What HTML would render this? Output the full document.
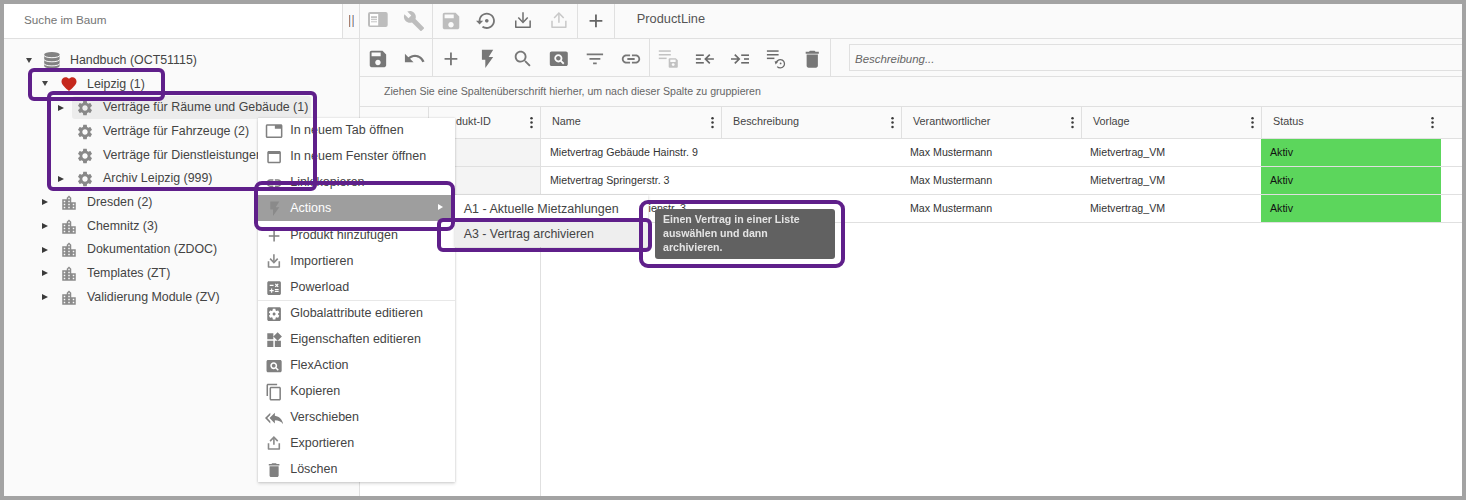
<!DOCTYPE html><html><head><meta charset="utf-8"><style>
html,body{margin:0;padding:0;}
body{width:1466px;height:500px;overflow:hidden;position:relative;background:#a3a3a3;font-family:"Liberation Sans", sans-serif;}
.t{position:absolute;white-space:nowrap;}
.r{position:absolute;}
</style></head><body>
<div class="r" style="left:4px;top:4px;width:1458px;height:492px;background:#ffffff;"></div>
<div class="r" style="left:4px;top:4px;width:355px;height:492px;background:#fafafa;"></div>
<div class="r" style="left:4px;top:4px;width:338px;height:34px;background:#ffffff;"></div>
<div class="r" style="left:4px;top:38px;width:355px;height:1px;background:#e0e0e0;"></div>
<div class="r" style="left:342px;top:4px;width:1px;height:34px;background:#e0e0e0;"></div>
<div class="r" style="left:359px;top:4px;width:1px;height:492px;background:#e0e0e0;"></div>
<div class="t" style="left:24px;top:13.80px;font-size:11.7px;line-height:11.7px;color:#757575;font-weight:normal;font-style:normal;letter-spacing:0px;">Suche im Baum</div>
<div class="r" style="left:349px;top:15px;width:1px;height:12px;background:#a88070;"></div>
<div class="r" style="left:350px;top:15px;width:1px;height:12px;background:#c8e4fa;"></div>
<div class="r" style="left:352px;top:15px;width:1px;height:12px;background:#e8b890;"></div>
<div class="r" style="left:353px;top:15px;width:1px;height:12px;background:#88a8d8;"></div>
<div class="r" style="left:360px;top:4px;width:1102px;height:492px;background:#ffffff;"></div>
<div class="r" style="left:360px;top:4px;width:1102px;height:34px;background:#fafafa;"></div>
<div class="r" style="left:360px;top:38px;width:1102px;height:1px;background:#e0e0e0;"></div>
<div class="r" style="left:360px;top:39px;width:1102px;height:37px;background:#fafafa;"></div>
<div class="r" style="left:360px;top:76px;width:1102px;height:1px;background:#e0e0e0;"></div>
<div class="r" style="left:360px;top:77px;width:1102px;height:29px;background:#fafafa;"></div>
<div class="r" style="left:360px;top:106px;width:1102px;height:1px;background:#e0e0e0;"></div>
<div class="r" style="left:360px;top:107px;width:1102px;height:31px;background:#fafafa;"></div>
<div class="r" style="left:360px;top:138px;width:1102px;height:1px;background:#e0e0e0;"></div>
<div class="r" style="left:432px;top:4px;width:1px;height:34px;background:#e0e0e0;"></div>
<div class="r" style="left:577px;top:4px;width:1px;height:34px;background:#e0e0e0;"></div>
<div class="r" style="left:614px;top:4px;width:1px;height:34px;background:#e0e0e0;"></div>
<div class="r" style="left:432px;top:39px;width:1px;height:37px;background:#e0e0e0;"></div>
<div class="r" style="left:649px;top:39px;width:1px;height:37px;background:#e0e0e0;"></div>
<div class="r" style="left:830px;top:39px;width:1px;height:37px;background:#e0e0e0;"></div>
<div class="t" style="left:636.8px;top:12.86px;font-size:12.8px;line-height:12.8px;color:#555;font-weight:normal;font-style:normal;letter-spacing:0px;">ProductLine</div>
<div class="r" style="left:849px;top:44px;width:613px;height:27px;background:#fafafa;box-sizing:border-box;border:1px solid #e0e0e0;border-right:none"></div>
<div class="t" style="left:855px;top:53.81px;font-size:11.45px;line-height:11.45px;color:#666;font-weight:normal;font-style:italic;letter-spacing:0px;">Beschreibung...</div>
<div class="t" style="left:384px;top:86.01px;font-size:10.62px;line-height:10.62px;color:#666;font-weight:normal;font-style:normal;letter-spacing:0px;">Ziehen Sie eine Spaltenüberschrift hierher, um nach dieser Spalte zu gruppieren</div>
<div class="r" style="left:428px;top:107px;width:1px;height:31px;background:#e0e0e0;"></div>
<div class="r" style="left:540px;top:107px;width:1px;height:31px;background:#e0e0e0;"></div>
<div class="r" style="left:721px;top:107px;width:1px;height:31px;background:#e0e0e0;"></div>
<div class="r" style="left:901px;top:107px;width:1px;height:31px;background:#e0e0e0;"></div>
<div class="r" style="left:1081px;top:107px;width:1px;height:31px;background:#e0e0e0;"></div>
<div class="r" style="left:1261px;top:107px;width:1px;height:31px;background:#e0e0e0;"></div>
<div class="t" style="left:456px;top:115.86px;font-size:10.8px;line-height:10.8px;color:#444;font-weight:normal;font-style:normal;letter-spacing:0px;">dukt-ID</div>
<div class="t" style="left:552px;top:115.86px;font-size:10.8px;line-height:10.8px;color:#444;font-weight:normal;font-style:normal;letter-spacing:0px;">Name</div>
<div class="t" style="left:733px;top:115.86px;font-size:10.8px;line-height:10.8px;color:#444;font-weight:normal;font-style:normal;letter-spacing:0px;">Beschreibung</div>
<div class="t" style="left:913px;top:115.86px;font-size:10.8px;line-height:10.8px;color:#444;font-weight:normal;font-style:normal;letter-spacing:0px;">Verantwortlicher</div>
<div class="t" style="left:1093px;top:115.86px;font-size:10.8px;line-height:10.8px;color:#444;font-weight:normal;font-style:normal;letter-spacing:0px;">Vorlage</div>
<div class="t" style="left:1273px;top:115.86px;font-size:10.8px;line-height:10.8px;color:#444;font-weight:normal;font-style:normal;letter-spacing:0px;">Status</div>
<svg class="r" style="left:529px;top:115px" width="5" height="15" viewBox="0 0 5 15" fill="#3a3a3a"><circle cx="2.5" cy="3.2" r="1.25"/><circle cx="2.5" cy="7.6" r="1.25"/><circle cx="2.5" cy="12" r="1.25"/></svg>
<svg class="r" style="left:710px;top:115px" width="5" height="15" viewBox="0 0 5 15" fill="#3a3a3a"><circle cx="2.5" cy="3.2" r="1.25"/><circle cx="2.5" cy="7.6" r="1.25"/><circle cx="2.5" cy="12" r="1.25"/></svg>
<svg class="r" style="left:890px;top:115px" width="5" height="15" viewBox="0 0 5 15" fill="#3a3a3a"><circle cx="2.5" cy="3.2" r="1.25"/><circle cx="2.5" cy="7.6" r="1.25"/><circle cx="2.5" cy="12" r="1.25"/></svg>
<svg class="r" style="left:1070px;top:115px" width="5" height="15" viewBox="0 0 5 15" fill="#3a3a3a"><circle cx="2.5" cy="3.2" r="1.25"/><circle cx="2.5" cy="7.6" r="1.25"/><circle cx="2.5" cy="12" r="1.25"/></svg>
<svg class="r" style="left:1250px;top:115px" width="5" height="15" viewBox="0 0 5 15" fill="#3a3a3a"><circle cx="2.5" cy="3.2" r="1.25"/><circle cx="2.5" cy="7.6" r="1.25"/><circle cx="2.5" cy="12" r="1.25"/></svg>
<svg class="r" style="left:1430px;top:115px" width="5" height="15" viewBox="0 0 5 15" fill="#3a3a3a"><circle cx="2.5" cy="3.2" r="1.25"/><circle cx="2.5" cy="7.6" r="1.25"/><circle cx="2.5" cy="12" r="1.25"/></svg>
<div class="r" style="left:428px;top:139px;width:112px;height:27px;background:#f4f4f4;"></div>
<div class="r" style="left:360px;top:166px;width:1102px;height:1px;background:#e0e0e0;"></div>
<div class="r" style="left:428px;top:138px;width:1px;height:28px;background:#e0e0e0;"></div>
<div class="r" style="left:540px;top:138px;width:1px;height:28px;background:#e0e0e0;"></div>
<div class="r" style="left:1261px;top:139px;width:180px;height:27px;background:#5cd65c;"></div>
<div class="r" style="left:428px;top:167px;width:112px;height:27px;background:#f4f4f4;"></div>
<div class="r" style="left:360px;top:194px;width:1102px;height:1px;background:#e0e0e0;"></div>
<div class="r" style="left:428px;top:166px;width:1px;height:28px;background:#e0e0e0;"></div>
<div class="r" style="left:540px;top:166px;width:1px;height:28px;background:#e0e0e0;"></div>
<div class="r" style="left:1261px;top:167px;width:180px;height:27px;background:#5cd65c;"></div>
<div class="r" style="left:428px;top:195px;width:112px;height:27px;background:#f4f4f4;"></div>
<div class="r" style="left:360px;top:222px;width:1102px;height:1px;background:#e0e0e0;"></div>
<div class="r" style="left:428px;top:194px;width:1px;height:28px;background:#e0e0e0;"></div>
<div class="r" style="left:540px;top:194px;width:1px;height:28px;background:#e0e0e0;"></div>
<div class="r" style="left:1261px;top:195px;width:180px;height:27px;background:#5cd65c;"></div>
<div class="t" style="left:550px;top:147.18px;font-size:10.65px;line-height:10.65px;color:#333;font-weight:normal;font-style:normal;letter-spacing:0px;">Mietvertrag Gebäude Hainstr. 9</div>
<div class="t" style="left:910px;top:147.18px;font-size:10.65px;line-height:10.65px;color:#333;font-weight:normal;font-style:normal;letter-spacing:0px;">Max Mustermann</div>
<div class="t" style="left:1090px;top:147.18px;font-size:10.65px;line-height:10.65px;color:#333;font-weight:normal;font-style:normal;letter-spacing:0px;">Mietvertrag_VM</div>
<div class="t" style="left:1270px;top:147.18px;font-size:10.65px;line-height:10.65px;color:#111;font-weight:normal;font-style:normal;letter-spacing:0px;">Aktiv</div>
<div class="t" style="left:550px;top:175.18px;font-size:10.65px;line-height:10.65px;color:#333;font-weight:normal;font-style:normal;letter-spacing:0px;">Mietvertrag Springerstr. 3</div>
<div class="t" style="left:910px;top:175.18px;font-size:10.65px;line-height:10.65px;color:#333;font-weight:normal;font-style:normal;letter-spacing:0px;">Max Mustermann</div>
<div class="t" style="left:1090px;top:175.18px;font-size:10.65px;line-height:10.65px;color:#333;font-weight:normal;font-style:normal;letter-spacing:0px;">Mietvertrag_VM</div>
<div class="t" style="left:1270px;top:175.18px;font-size:10.65px;line-height:10.65px;color:#111;font-weight:normal;font-style:normal;letter-spacing:0px;">Aktiv</div>
<div class="t" style="left:550px;top:203.18px;font-size:10.65px;line-height:10.65px;color:#333;font-weight:normal;font-style:normal;letter-spacing:0px;"></div>
<div class="t" style="left:910px;top:203.18px;font-size:10.65px;line-height:10.65px;color:#333;font-weight:normal;font-style:normal;letter-spacing:0px;">Max Mustermann</div>
<div class="t" style="left:1090px;top:203.18px;font-size:10.65px;line-height:10.65px;color:#333;font-weight:normal;font-style:normal;letter-spacing:0px;">Mietvertrag_VM</div>
<div class="t" style="left:1270px;top:203.18px;font-size:10.65px;line-height:10.65px;color:#111;font-weight:normal;font-style:normal;letter-spacing:0px;">Aktiv</div>
<div class="r" style="left:540px;top:222px;width:1px;height:274px;background:#e0e0e0;"></div>
<div class="t" style="left:648.6px;top:203.38px;font-size:10.65px;line-height:10.65px;color:#333;font-weight:normal;font-style:normal;letter-spacing:0px;">ienstr. 3</div>
<svg class="r" style="left:368px;top:11.8px" width="20" height="15" viewBox="0 0 20 15"><rect x="0" y="0" width="19.7" height="15" rx="2" fill="#bdbdbd"/><rect x="2" y="2" width="8.2" height="11.5" fill="#fff"/><rect x="3" y="4.2" width="6" height="2.1" fill="#c4c4c4"/><rect x="3" y="7.1" width="6" height="1" fill="#c4c4c4"/><rect x="3" y="9.3" width="6" height="1" fill="#c4c4c4"/></svg>
<svg class="r" style="left:403.1px;top:9.6px;" width="22" height="22" viewBox="0 0 24 24" fill="#bdbdbd"><path d="M22.7 19l-9.1-9.1c.9-2.3.4-5-1.5-6.9-2-2-5-2.4-7.4-1.3L9 6 6 9 1.6 4.7C.4 7.1.9 10.1 2.9 12.1c1.9 1.9 4.6 2.4 6.9 1.5l9.1 9.1c.4.4 1 .4 1.4 0l2.3-2.3c.5-.4.5-1.1.1-1.4z"/></svg>
<svg class="r" style="left:440.2px;top:10px;" width="22" height="22" viewBox="0 0 24 24" fill="#bdbdbd"><path d="M17 3H5c-1.11 0-2 .9-2 2v14c0 1.1.89 2 2 2h14c1.1 0 2-.9 2-2V7l-4-4zm-5 16c-1.66 0-3-1.34-3-3s1.34-3 3-3 3 1.34 3 3-1.34 3-3 3zm3-10H5V5h10v4z"/></svg>
<svg class="r" style="left:476.3px;top:10.1px;" width="21.6" height="21.6" viewBox="0 0 24 24" fill="#757575"><path d="M14 12c0-1.1-.9-2-2-2s-2 .9-2 2 .9 2 2 2 2-.9 2-2zm-2-9c-4.97 0-9 4.03-9 9H0l4 4 4-4H5c0-3.87 3.13-7 7-7s7 3.13 7 7-3.13 7-7 7c-1.51 0-2.91-.49-4.06-1.3l-1.42 1.44C8.04 20.3 9.94 21 12 21c4.97 0 9-4.03 9-9s-4.03-9-9-9z"/></svg>
<svg class="r" style="left:513px;top:10px" width="20" height="21" viewBox="513 10 20 21"><g fill="none" stroke="#6e6e6e" stroke-width="1.5"><path d="M515.75 20.5 V27.25 H530.15 V20.5" stroke-linejoin="round"/><path d="M523 12.3 V21.599999999999998"/><path d="M518.3 17.6 L523 22.4 L527.7 17.6"/></g></svg>
<svg class="r" style="left:549px;top:11px" width="20" height="19" viewBox="549 11 20 19"><g fill="none" stroke="#c8c8c8" stroke-width="1.5"><path d="M552.0 20.7 V27.15 H565.85 V20.7" stroke-linejoin="round"/><path d="M558.9 13.8 V22.7"/><path d="M554.1 18.1 L558.9 13 L563.6999999999999 18.1"/></g></svg>
<svg class="r" style="left:585px;top:9.7px;" width="21.9" height="21.9" viewBox="0 0 24 24" fill="#666"><path d="M19 13h-6v6h-2v-6H5v-2h6V5h2v6h6v2z"/></svg>
<svg class="r" style="left:367.1px;top:48.1px;" width="21.9" height="21.9" viewBox="0 0 24 24" fill="#777"><path d="M17 3H5c-1.11 0-2 .9-2 2v14c0 1.1.89 2 2 2h14c1.1 0 2-.9 2-2V7l-4-4zm-5 16c-1.66 0-3-1.34-3-3s1.34-3 3-3 3 1.34 3 3-1.34 3-3 3zm3-10H5V5h10v4z"/></svg>
<svg class="r" style="left:402.7px;top:47.2px;" width="23" height="23" viewBox="0 0 24 24" fill="#777"><path d="M12.5 8c-2.65 0-5.050.99-6.9 2.6L2 7v9h9l-3.62-3.62c1.39-1.16 3.16-1.88 5.12-1.88 3.54 0 6.55 2.31 7.6 5.5l2.37-.78C21.08 11.03 17.15 8 12.5 8z"/></svg>
<svg class="r" style="left:440px;top:47.6px;" width="21.9" height="21.9" viewBox="0 0 24 24" fill="#777"><path d="M19 13h-6v6h-2v-6H5v-2h6V5h2v6h6v2z"/></svg>
<svg class="r" style="left:474px;top:48px" width="27.1" height="21.8" viewBox="0 0 24 24" preserveAspectRatio="none" fill="#777"><path d="M7 2v11h3v9l7-12h-4l4-8z"/></svg>
<svg class="r" style="left:512.1px;top:48.1px;" width="21.8" height="21.8" viewBox="0 0 24 24" fill="#777"><path d="M15.5 14h-.79l-.28-.27C15.41 12.59 16 11.11 16 9.5 16 5.91 13.09 3 9.5 3S3 5.91 3 9.5 5.91 16 9.5 16c1.61 0 3.090-.59 4.23-1.57l.27.28v.79l5 4.99L20.49 19l-4.99-5zm-6 0C7.01 14 5 11.99 5 9.5S7.01 5 9.5 5 14 7.01 14 9.5 11.99 14 9.5 14z"/></svg>
<svg class="r" style="left:548.2px;top:48.3px;" width="21.6" height="21.6" viewBox="0 0 24 24" fill="#777"><path d="M11.5 9C10.12 9 9 10.12 9 11.5s1.12 2.5 2.5 2.5 2.5-1.12 2.5-2.5S12.88 9 11.5 9zM20 4H4c-1.1 0-2 .9-2 2v12c0 1.1.9 2 2 2h16c1.1 0 2-.9 2-2V6c0-1.1-.9-2-2-2zm-3.21 14.21l-2.91-2.91c-.69.44-1.51.7-2.38.7C9 16 7 14 7 11.5S9 7 11.5 7 16 9 16 11.5c0 .88-.26 1.69-.7 2.39l2.91 2.9-1.42 1.42z"/></svg>
<svg class="r" style="left:584.3px;top:48.2px;" width="21.8" height="21.8" viewBox="0 0 24 24" fill="#777"><path d="M10 18h4v-2h-4v2zM3 6v2h18V6H3zm3 7h12v-2H6v2z"/></svg>
<svg class="r" style="left:620px;top:48px;" width="22" height="22" viewBox="0 0 24 24" fill="#777"><path d="M3.9 12c0-1.71 1.39-3.1 3.1-3.1h4V7H7c-2.76 0-5 2.24-5 5s2.24 5 5 5h4v-1.9H7c-1.71 0-3.1-1.39-3.1-3.1zM8 13h8v-2H8v2zm9-6h-4v1.9h4c1.71 0 3.1 1.39 3.1 3.1s-1.39 3.1-3.1 3.1h-4V17h4c2.76 0 5-2.24 5-5s-2.24-5-5-5z"/></svg>
<svg class="r" style="left:800.5px;top:47.9px;" width="22.5" height="22.5" viewBox="0 0 24 24" fill="#777"><path d="M6 19c0 1.1.9 2 2 2h8c1.1 0 2-.9 2-2V7H6v12zM19 4h-3.5l-1-1h-5l-1 1H5v2h14V4z"/></svg>
<svg class="r" style="left:650px;top:40px" width="40" height="36" viewBox="650 40 40 36"><g fill="#c2c2c2"><rect x="658.8" y="50.3" width="12" height="1.5"/><rect x="658.8" y="54" width="12" height="1.5"/><rect x="658.8" y="57.6" width="7.8" height="1.5"/><path d="M668.7 59.3 a1 1 0 0 1 1 -1 h6.1 l2 2 v6.5 a1 1 0 0 1 -1 1 h-7.1 a1 1 0 0 1 -1 -1z"/></g><rect x="670.3" y="59.6" width="5.3" height="2.4" fill="#fafafa"/><circle cx="673.2" cy="64.6" r="1.4" fill="#fafafa"/></svg>
<svg class="r" style="left:690px;top:40px" width="100" height="36" viewBox="690 40 100 36"><g fill="#6a6a6a"><rect x="695.9" y="54.4" width="7.9" height="1.6"/><rect x="695.9" y="58.2" width="5" height="1.6"/><rect x="695.9" y="62" width="7.9" height="1.6"/><rect x="741.2" y="54.4" width="7.8" height="1.6"/><rect x="744" y="58.2" width="5" height="1.6"/><rect x="741.2" y="62" width="7.8" height="1.6"/><rect x="766.9" y="50.3" width="11.7" height="1.5"/><rect x="766.9" y="54" width="11.7" height="1.5"/><rect x="766.9" y="57.6" width="7.5" height="1.5"/></g><g stroke="#6a6a6a" stroke-width="1.7" fill="none"><path d="M713.9 59 H705.6 M709.8 54.6 L705.4 59 L709.8 63.4"/><path d="M731 59 H739 M734.8 54.6 L739.2 59 L734.8 63.4"/><path d="M777.2 66.6 A4.2 4.2 0 1 0 776.4 62.2" stroke-width="1.3"/></g><path d="M774.6 61.2 L778.4 61.6 L775.6 64.6z" fill="#6a6a6a"/><circle cx="780.6" cy="63.4" r="0.9" fill="#6a6a6a"/></svg>
<div class="r" style="left:72px;top:96px;width:239px;height:23px;background:#ececec;border-radius:3px"></div>
<div class="t" style="left:70px;top:54.00px;font-size:12.4px;line-height:12.4px;color:#444;font-weight:normal;font-style:normal;letter-spacing:0px;">Handbuch (OCT51115)</div>
<div class="r" style="left:26px;top:57.5px;width:0;height:0;border-left:3.5px solid transparent;border-right:3.5px solid transparent;border-top:5.5px solid #444"></div>
<svg class="r" style="left:44px;top:52px" width="16" height="17" viewBox="0 0 16 17"><path d="M0.2 2.4 A7.7 2.4 0 0 1 15.6 2.4 V14 A7.7 2.4 0 0 1 0.2 14z" fill="#828282"/><g stroke="#fafafa" stroke-width="1" fill="none"><path d="M0 3.3 A7.9 2.4 0 0 0 15.8 3.3"/><path d="M0 7.4 A7.9 2.4 0 0 0 15.8 7.4"/><path d="M0 11.5 A7.9 2.4 0 0 0 15.8 11.5"/></g></svg>
<div class="t" style="left:87px;top:77.65px;font-size:12.4px;line-height:12.4px;color:#444;font-weight:normal;font-style:normal;letter-spacing:0px;">Leipzig (1)</div>
<div class="r" style="left:42px;top:81.2px;width:0;height:0;border-left:3.5px solid transparent;border-right:3.5px solid transparent;border-top:5.5px solid #444"></div>
<svg class="r" style="left:60px;top:75.15px;" width="18" height="18" viewBox="0 0 24 24" fill="#c5281c"><path d="M12 21.35l-1.45-1.32C5.4 15.36 2 12.28 2 8.5 2 5.42 4.42 3 7.5 3c1.74 0 3.41.81 4.5 2.09C13.09 3.81 14.76 3 16.5 3 19.58 3 22 5.42 22 8.5c0 3.78-3.4 6.86-8.55 11.54L12 21.35z"/></svg>
<div class="t" style="left:103px;top:101.30px;font-size:12.4px;line-height:12.4px;color:#444;font-weight:normal;font-style:normal;letter-spacing:0px;">Verträge für Räume und Gebäude (1)</div>
<div class="r" style="left:58px;top:104.6px;width:0;height:0;border-top:3.6px solid transparent;border-bottom:3.6px solid transparent;border-left:6.3px solid #3a3a3a"></div>
<svg class="r" style="left:75.5px;top:99.3px;" width="18" height="18" viewBox="0 0 24 24" fill="#888"><path d="M19.14 12.94c.04-.3.06-.61.06-.94 0-.32-.02-.64-.07-.94l2.03-1.58c.18-.14.23-.41.12-.61l-1.92-3.32c-.12-.22-.37-.29-.59-.22l-2.39.96c-.5-.38-1.03-.7-1.62-.94L14.4 2.81c-.04-.24-.24-.41-.48-.41h-3.84c-.24 0-.43.17-.47.41L9.25 5.35c-.59.24-1.13.57-1.62.94L5.24 5.33c-.22-.08-.47 0-.59.22L2.74 8.87c-.12.21-.08.47.12.61l2.03 1.58c-.05.3-.09.63-.09.94s.02.64.07.94l-2.03 1.58c-.18.14-.23.41-.12.61l1.92 3.32c.12.22.37.29.59.22l2.39-.96c.5.38 1.03.7 1.62.94l.36 2.54c.05.24.24.41.48.41h3.84c.24 0 .44-.17.47-.41l.36-2.54c.59-.24 1.13-.56 1.62-.94l2.39.96c.22.08.47 0 .59-.22l1.92-3.32c.12-.22.07-.47-.12-.61l-2.01-1.58zM12 15.6c-1.98 0-3.6-1.62-3.6-3.6s1.62-3.6 3.6-3.6 3.6 1.62 3.6 3.6-1.62 3.6-3.6 3.6z"/></svg>
<div class="t" style="left:103px;top:124.95px;font-size:12.4px;line-height:12.4px;color:#444;font-weight:normal;font-style:normal;letter-spacing:0px;">Verträge für Fahrzeuge (2)</div>
<svg class="r" style="left:75.5px;top:122.94999999999999px;" width="18" height="18" viewBox="0 0 24 24" fill="#888"><path d="M19.14 12.94c.04-.3.06-.61.06-.94 0-.32-.02-.64-.07-.94l2.03-1.58c.18-.14.23-.41.12-.61l-1.92-3.32c-.12-.22-.37-.29-.59-.22l-2.39.96c-.5-.38-1.03-.7-1.62-.94L14.4 2.81c-.04-.24-.24-.41-.48-.41h-3.84c-.24 0-.43.17-.47.41L9.25 5.35c-.59.24-1.13.57-1.62.94L5.24 5.33c-.22-.08-.47 0-.59.22L2.74 8.87c-.12.21-.08.47.12.61l2.03 1.58c-.05.3-.09.63-.09.94s.02.64.07.94l-2.03 1.58c-.18.14-.23.41-.12.61l1.92 3.32c.12.22.37.29.59.22l2.39-.96c.5.38 1.03.7 1.62.94l.36 2.54c.05.24.24.41.48.41h3.84c.24 0 .44-.17.47-.41l.36-2.54c.59-.24 1.13-.56 1.62-.94l2.39.96c.22.08.47 0 .59-.22l1.92-3.32c.12-.22.07-.47-.12-.61l-2.01-1.58zM12 15.6c-1.98 0-3.6-1.62-3.6-3.6s1.62-3.6 3.6-3.6 3.6 1.62 3.6 3.6-1.62 3.6-3.6 3.6z"/></svg>
<div class="t" style="left:103px;top:148.60px;font-size:12.4px;line-height:12.4px;color:#444;font-weight:normal;font-style:normal;letter-spacing:0px;">Verträge für Dienstleistungen (1)</div>
<svg class="r" style="left:75.5px;top:146.6px;" width="18" height="18" viewBox="0 0 24 24" fill="#888"><path d="M19.14 12.94c.04-.3.06-.61.06-.94 0-.32-.02-.64-.07-.94l2.03-1.58c.18-.14.23-.41.12-.61l-1.92-3.32c-.12-.22-.37-.29-.59-.22l-2.39.96c-.5-.38-1.03-.7-1.62-.94L14.4 2.81c-.04-.24-.24-.41-.48-.41h-3.84c-.24 0-.43.17-.47.41L9.25 5.35c-.59.24-1.13.57-1.62.94L5.24 5.33c-.22-.08-.47 0-.59.22L2.74 8.87c-.12.21-.08.47.12.61l2.03 1.58c-.05.3-.09.63-.09.94s.02.64.07.94l-2.03 1.58c-.18.14-.23.41-.12.61l1.92 3.32c.12.22.37.29.59.22l2.39-.96c.5.38 1.03.7 1.62.94l.36 2.54c.05.24.24.41.48.41h3.84c.24 0 .44-.17.47-.41l.36-2.54c.59-.24 1.13-.56 1.62-.94l2.39.96c.22.08.47 0 .59-.22l1.92-3.32c.12-.22.07-.47-.12-.61l-2.01-1.58zM12 15.6c-1.98 0-3.6-1.62-3.6-3.6s1.62-3.6 3.6-3.6 3.6 1.62 3.6 3.6-1.62 3.6-3.6 3.6z"/></svg>
<div class="t" style="left:103px;top:172.25px;font-size:12.4px;line-height:12.4px;color:#444;font-weight:normal;font-style:normal;letter-spacing:0px;">Archiv Leipzig (999)</div>
<div class="r" style="left:58px;top:175.6px;width:0;height:0;border-top:3.6px solid transparent;border-bottom:3.6px solid transparent;border-left:6.3px solid #3a3a3a"></div>
<svg class="r" style="left:75.5px;top:170.25px;" width="18" height="18" viewBox="0 0 24 24" fill="#888"><path d="M19.14 12.94c.04-.3.06-.61.06-.94 0-.32-.02-.64-.07-.94l2.03-1.58c.18-.14.23-.41.12-.61l-1.92-3.32c-.12-.22-.37-.29-.59-.22l-2.39.96c-.5-.38-1.03-.7-1.62-.94L14.4 2.81c-.04-.24-.24-.41-.48-.41h-3.84c-.24 0-.43.17-.47.41L9.25 5.35c-.59.24-1.13.57-1.62.94L5.24 5.33c-.22-.08-.47 0-.59.22L2.74 8.87c-.12.21-.08.47.12.61l2.03 1.58c-.05.3-.09.63-.09.94s.02.64.07.94l-2.03 1.58c-.18.14-.23.41-.12.61l1.92 3.32c.12.22.37.29.59.22l2.39-.96c.5.38 1.03.7 1.62.94l.36 2.54c.05.24.24.41.48.41h3.84c.24 0 .44-.17.47-.41l.36-2.54c.59-.24 1.13-.56 1.62-.94l2.39.96c.22.08.47 0 .59-.22l1.92-3.32c.12-.22.07-.47-.12-.61l-2.01-1.58zM12 15.6c-1.98 0-3.6-1.62-3.6-3.6s1.62-3.6 3.6-3.6 3.6 1.62 3.6 3.6-1.62 3.6-3.6 3.6z"/></svg>
<div class="t" style="left:87px;top:195.90px;font-size:12.4px;line-height:12.4px;color:#444;font-weight:normal;font-style:normal;letter-spacing:0px;">Dresden (2)</div>
<div class="r" style="left:42px;top:199.2px;width:0;height:0;border-top:3.6px solid transparent;border-bottom:3.6px solid transparent;border-left:6.3px solid #3a3a3a"></div>
<svg class="r" style="left:60px;top:193.89999999999998px;" width="18" height="18" viewBox="0 0 24 24" fill="#8a8a8a"><path d="M15 11V5l-3-3-3 3v2H3v14h18V11h-6zm-8 8H5v-2h2v2zm0-4H5v-2h2v2zm0-4H5V9h2v2zm6 8h-2v-2h2v2zm0-4h-2v-2h2v2zm0-4h-2V9h2v2zm0-4h-2V5h2v2zm6 12h-2v-2h2v2zm0-4h-2v-2h2v2z"/></svg>
<div class="t" style="left:87px;top:219.55px;font-size:12.4px;line-height:12.4px;color:#444;font-weight:normal;font-style:normal;letter-spacing:0px;">Chemnitz (3)</div>
<div class="r" style="left:42px;top:222.8px;width:0;height:0;border-top:3.6px solid transparent;border-bottom:3.6px solid transparent;border-left:6.3px solid #3a3a3a"></div>
<svg class="r" style="left:60px;top:217.54999999999998px;" width="18" height="18" viewBox="0 0 24 24" fill="#8a8a8a"><path d="M15 11V5l-3-3-3 3v2H3v14h18V11h-6zm-8 8H5v-2h2v2zm0-4H5v-2h2v2zm0-4H5V9h2v2zm6 8h-2v-2h2v2zm0-4h-2v-2h2v2zm0-4h-2V9h2v2zm0-4h-2V5h2v2zm6 12h-2v-2h2v2zm0-4h-2v-2h2v2z"/></svg>
<div class="t" style="left:87px;top:243.20px;font-size:12.4px;line-height:12.4px;color:#444;font-weight:normal;font-style:normal;letter-spacing:0px;">Dokumentation (ZDOC)</div>
<div class="r" style="left:42px;top:246.5px;width:0;height:0;border-top:3.6px solid transparent;border-bottom:3.6px solid transparent;border-left:6.3px solid #3a3a3a"></div>
<svg class="r" style="left:60px;top:241.2px;" width="18" height="18" viewBox="0 0 24 24" fill="#8a8a8a"><path d="M15 11V5l-3-3-3 3v2H3v14h18V11h-6zm-8 8H5v-2h2v2zm0-4H5v-2h2v2zm0-4H5V9h2v2zm6 8h-2v-2h2v2zm0-4h-2v-2h2v2zm0-4h-2V9h2v2zm0-4h-2V5h2v2zm6 12h-2v-2h2v2zm0-4h-2v-2h2v2z"/></svg>
<div class="t" style="left:87px;top:266.85px;font-size:12.4px;line-height:12.4px;color:#444;font-weight:normal;font-style:normal;letter-spacing:0px;">Templates (ZT)</div>
<div class="r" style="left:42px;top:270.2px;width:0;height:0;border-top:3.6px solid transparent;border-bottom:3.6px solid transparent;border-left:6.3px solid #3a3a3a"></div>
<svg class="r" style="left:60px;top:264.85px;" width="18" height="18" viewBox="0 0 24 24" fill="#8a8a8a"><path d="M15 11V5l-3-3-3 3v2H3v14h18V11h-6zm-8 8H5v-2h2v2zm0-4H5v-2h2v2zm0-4H5V9h2v2zm6 8h-2v-2h2v2zm0-4h-2v-2h2v2zm0-4h-2V9h2v2zm0-4h-2V5h2v2zm6 12h-2v-2h2v2zm0-4h-2v-2h2v2z"/></svg>
<div class="t" style="left:87px;top:290.50px;font-size:12.4px;line-height:12.4px;color:#444;font-weight:normal;font-style:normal;letter-spacing:0px;">Validierung Module (ZV)</div>
<div class="r" style="left:42px;top:293.8px;width:0;height:0;border-top:3.6px solid transparent;border-bottom:3.6px solid transparent;border-left:6.3px solid #3a3a3a"></div>
<svg class="r" style="left:60px;top:288.5px;" width="18" height="18" viewBox="0 0 24 24" fill="#8a8a8a"><path d="M15 11V5l-3-3-3 3v2H3v14h18V11h-6zm-8 8H5v-2h2v2zm0-4H5v-2h2v2zm0-4H5V9h2v2zm6 8h-2v-2h2v2zm0-4h-2v-2h2v2zm0-4h-2V9h2v2zm0-4h-2V5h2v2zm6 12h-2v-2h2v2zm0-4h-2v-2h2v2z"/></svg>
<div class="r" style="left:258px;top:118px;width:197px;height:364px;background:#ffffff;box-shadow:0 0 2px rgba(0,0,0,0.18), 0 2px 3px rgba(0,0,0,0.12)"></div>
<div class="t" style="left:290.2px;top:123.52px;font-size:12.5px;line-height:12.5px;color:#444;font-weight:normal;font-style:normal;letter-spacing:0px;">In neuem Tab öffnen</div>
<svg class="r" style="left:265px;top:121.8px;" width="18.2" height="18.2" viewBox="0 0 24 24" fill="#808080"><path d="M21 3H3c-1.1 0-2 .9-2 2v14c0 1.1.9 2 2 2h18c1.1 0 2-.9 2-2V5c0-1.1-.9-2-2-2zm0 16H3V5h10v4h8v10z"/></svg>
<div class="t" style="left:290.2px;top:149.52px;font-size:12.5px;line-height:12.5px;color:#444;font-weight:normal;font-style:normal;letter-spacing:0px;">In neuem Fenster öffnen</div>
<svg class="r" style="left:265px;top:147.8px;" width="18.2" height="18.2" viewBox="0 0 24 24" fill="#808080"><path d="M19 4H5c-1.11 0-2 .9-2 2v12c0 1.1.89 2 2 2h14c1.1 0 2-.9 2-2V6c0-1.1-.89-2-2-2zm0 14H5V8h14v10z"/></svg>
<div class="t" style="left:290.2px;top:175.52px;font-size:12.5px;line-height:12.5px;color:#444;font-weight:normal;font-style:normal;letter-spacing:0px;">Link kopieren</div>
<svg class="r" style="left:265px;top:173.8px;" width="18.2" height="18.2" viewBox="0 0 24 24" fill="#808080"><path d="M3.9 12c0-1.71 1.39-3.1 3.1-3.1h4V7H7c-2.76 0-5 2.24-5 5s2.24 5 5 5h4v-1.9H7c-1.71 0-3.1-1.39-3.1-3.1zM8 13h8v-2H8v2zm9-6h-4v1.9h4c1.71 0 3.1 1.39 3.1 3.1s-1.39 3.1-3.1 3.1h-4V17h4c2.76 0 5-2.24 5-5s-2.24-5-5-5z"/></svg>
<div class="r" style="left:258px;top:195px;width:197px;height:26px;background:#9e9e9e;"></div>
<div class="r" style="left:438.3px;top:204.3px;width:0;height:0;border-top:3.8px solid transparent;border-bottom:3.8px solid transparent;border-left:5.5px solid #fff"></div>
<div class="t" style="left:290.2px;top:201.52px;font-size:12.5px;line-height:12.5px;color:#fff;font-weight:normal;font-style:normal;letter-spacing:0px;">Actions</div>
<svg class="r" style="left:263.7px;top:199.85px" width="21.6" height="17.4" viewBox="0 0 24 24" preserveAspectRatio="none" fill="#8a8a8a"><path d="M7 2v11h3v9l7-12h-4l4-8z"/></svg>
<div class="t" style="left:290.2px;top:228.52px;font-size:12.5px;line-height:12.5px;color:#444;font-weight:normal;font-style:normal;letter-spacing:0px;">Produkt hinzufügen</div>
<svg class="r" style="left:265px;top:226.8px;" width="18.2" height="18.2" viewBox="0 0 24 24" fill="#808080"><path d="M19 13h-6v6h-2v-6H5v-2h6V5h2v6h6v2z"/></svg>
<div class="t" style="left:290.2px;top:254.52px;font-size:12.5px;line-height:12.5px;color:#444;font-weight:normal;font-style:normal;letter-spacing:0px;">Importieren</div>
<svg class="r" style="left:265px;top:252px" width="18" height="18" viewBox="265 252 18 18"><g fill="none" stroke="#8a8a8a" stroke-width="1.6"><path d="M268.5 261.2 V267.0 H279.3 V261.2" stroke-linejoin="round"/><path d="M273.9 254.2 V261.8"/><path d="M270.09999999999997 258.6 L273.9 262.6 L277.7 258.6"/></g></svg>
<div class="t" style="left:290.2px;top:280.52px;font-size:12.5px;line-height:12.5px;color:#444;font-weight:normal;font-style:normal;letter-spacing:0px;">Powerload</div>
<svg class="r" style="left:265px;top:278.8px;" width="18.2" height="18.2" viewBox="0 0 24 24" fill="#808080"><path d="M19 3H5c-1.1 0-2 .9-2 2v14c0 1.1.9 2 2 2h14c1.1 0 2-.9 2-2V5c0-1.1-.9-2-2-2zm-5.97 4.06L14.09 6l1.41 1.41L16.91 6l1.06 1.06-1.41 1.41 1.41 1.41-1.06 1.06-1.41-1.4-1.41 1.41-1.06-1.06 1.41-1.41-1.41-1.42zm-6.78.66h5v1.5h-5v-1.5zM11.5 16h-2v2H8v-2H6v-1.5h2v-2h1.5v2h2V16zm6.5 1.25h-5v-1.5h5v1.5zm0-2.5h-5v-1.5h5v1.5z"/></svg>
<div class="t" style="left:290.2px;top:306.52px;font-size:12.5px;line-height:12.5px;color:#444;font-weight:normal;font-style:normal;letter-spacing:0px;">Globalattribute editieren</div>
<svg class="r" style="left:265px;top:304.8px;" width="18.2" height="18.2" viewBox="0 0 24 24" fill="#808080"><path d="M12 10c-1.1 0-2 .9-2 2s.9 2 2 2 2-.9 2-2-.9-2-2-2zm7-7H5c-1.11 0-2 .9-2 2v14c0 1.1.89 2 2 2h14c1.11 0 2-.9 2-2V5c0-1.1-.89-2-2-2zm-1.75 9c0 .23-.02.46-.05.68l1.48 1.16c.13.11.17.3.08.45l-1.4 2.42c-.09.15-.27.21-.43.15l-1.74-.7c-.36.28-.76.51-1.18.69l-.26 1.85c-.03.17-.18.3-.35.3h-2.8c-.17 0-.32-.13-.35-.29l-.26-1.850c-.43-.18-.82-.41-1.18-.69l-1.74.7c-.16.06-.34 0-.43-.15l-1.4-2.42c-.09-.15-.05-.34.08-.45l1.48-1.16c-.03-.23-.05-.46-.05-.69 0-.23.02-.46.05-.68l-1.48-1.16c-.13-.11-.17-.3-.08-.45l1.4-2.42c.09-.15.27-.21.43-.15l1.74.7c.36-.28.76-.51 1.18-.69l.26-1.85c.03-.17.18-.3.35-.3h2.8c.17 0 .32.13.35.29l.26 1.85c.43.18.82.41 1.18.69l1.74-.7c.16-.06.34 0 .43.15l1.4 2.42c.09.15.05.34-.08.45l-1.48 1.16c.03.23.05.46.05.69z"/></svg>
<div class="t" style="left:290.2px;top:332.52px;font-size:12.5px;line-height:12.5px;color:#444;font-weight:normal;font-style:normal;letter-spacing:0px;">Eigenschaften editieren</div>
<svg class="r" style="left:265px;top:330.8px;" width="18.2" height="18.2" viewBox="0 0 24 24" fill="#808080"><path d="M13 13v8h8v-8h-8zM3 21h8v-8H3v8zM3 3v8h8V3H3zm13.66-1.31L11 7.34 16.66 13l5.66-5.66-5.66-5.65z"/></svg>
<div class="t" style="left:290.2px;top:358.52px;font-size:12.5px;line-height:12.5px;color:#444;font-weight:normal;font-style:normal;letter-spacing:0px;">FlexAction</div>
<svg class="r" style="left:265px;top:356.8px;" width="18.2" height="18.2" viewBox="0 0 24 24" fill="#808080"><path d="M11.5 9C10.12 9 9 10.12 9 11.5s1.12 2.5 2.5 2.5 2.5-1.12 2.5-2.5S12.88 9 11.5 9zM20 4H4c-1.1 0-2 .9-2 2v12c0 1.1.9 2 2 2h16c1.1 0 2-.9 2-2V6c0-1.1-.9-2-2-2zm-3.21 14.21l-2.91-2.91c-.69.44-1.51.7-2.38.7C9 16 7 14 7 11.5S9 7 11.5 7 16 9 16 11.5c0 .88-.26 1.69-.7 2.39l2.91 2.9-1.42 1.42z"/></svg>
<div class="t" style="left:290.2px;top:384.52px;font-size:12.5px;line-height:12.5px;color:#444;font-weight:normal;font-style:normal;letter-spacing:0px;">Kopieren</div>
<svg class="r" style="left:265px;top:382.8px;" width="18.2" height="18.2" viewBox="0 0 24 24" fill="#808080"><path d="M16 1H4c-1.1 0-2 .9-2 2v14h2V3h12V1zm3 4H8c-1.1 0-2 .9-2 2v14c0 1.1.9 2 2 2h11c1.1 0 2-.9 2-2V7c0-1.1-.9-2-2-2zm0 16H8V7h11v14z"/></svg>
<div class="t" style="left:290.2px;top:410.52px;font-size:12.5px;line-height:12.5px;color:#444;font-weight:normal;font-style:normal;letter-spacing:0px;">Verschieben</div>
<svg class="r" style="left:265px;top:408.8px;" width="18.2" height="18.2" viewBox="0 0 24 24" fill="#808080"><path d="M7 8V5l-7 7 7 7v-3l-4-4 4-4zm6 1V5l-7 7 7 7v-4.1c5 0 8.5 1.6 11 5.1-1-5-4-10-11-11z"/></svg>
<div class="t" style="left:290.2px;top:436.52px;font-size:12.5px;line-height:12.5px;color:#444;font-weight:normal;font-style:normal;letter-spacing:0px;">Exportieren</div>
<svg class="r" style="left:265px;top:435px" width="18" height="17" viewBox="265 435 18 17"><g fill="none" stroke="#8a8a8a" stroke-width="1.6"><path d="M268.5 443.2 V449.0 H279.3 V443.2" stroke-linejoin="round"/><path d="M273.9 437.90000000000003 V444.8"/><path d="M270.09999999999997 441.1 L273.9 437.1 L277.7 441.1"/></g></svg>
<div class="t" style="left:290.2px;top:462.52px;font-size:12.5px;line-height:12.5px;color:#444;font-weight:normal;font-style:normal;letter-spacing:0px;">Löschen</div>
<svg class="r" style="left:265px;top:460.8px;" width="18.2" height="18.2" viewBox="0 0 24 24" fill="#808080"><path d="M6 19c0 1.1.9 2 2 2h8c1.1 0 2-.9 2-2V7H6v12zM19 4h-3.5l-1-1h-5l-1 1H5v2h14V4z"/></svg>
<div class="r" style="left:258px;top:300px;width:197px;height:1px;background:#e8e8e8;"></div>
<div class="r" style="left:455px;top:195px;width:193px;height:52px;background:#ffffff;box-shadow:0 1px 3px rgba(0,0,0,0.2)"></div>
<div class="r" style="left:455px;top:221px;width:193px;height:26px;background:#eeeeee;"></div>
<div class="t" style="left:463.7px;top:203.22px;font-size:12.5px;line-height:12.5px;color:#444;font-weight:normal;font-style:normal;letter-spacing:0px;">A1 - Aktuelle Mietzahlungen</div>
<div class="t" style="left:463.7px;top:228.40px;font-size:12.4px;line-height:12.4px;color:#444;font-weight:normal;font-style:normal;letter-spacing:0px;">A3 - Vertrag archivieren</div>
<div class="r" style="left:655px;top:209px;width:180px;height:50px;background:#616161;border-radius:3px"></div>
<div class="t" style="left:663px;top:214.03px;font-size:10.6px;line-height:10.6px;color:#e4e4e4;font-weight:bold;font-style:normal;letter-spacing:0px;will-change:transform">Einen Vertrag in einer Liste</div>
<div class="t" style="left:663px;top:228.03px;font-size:10.6px;line-height:10.6px;color:#e4e4e4;font-weight:bold;font-style:normal;letter-spacing:0px;will-change:transform">auswählen und dann</div>
<div class="t" style="left:663px;top:242.03px;font-size:10.6px;line-height:10.6px;color:#e4e4e4;font-weight:bold;font-style:normal;letter-spacing:0px;will-change:transform">archivieren.</div>
<div class="r" style="left:28px;top:68px;width:137px;height:33px;box-sizing:border-box;border:4px solid #5f1f8a;border-radius:6px"></div>
<div class="r" style="left:47px;top:91px;width:270px;height:100px;box-sizing:border-box;border:4px solid #5f1f8a;border-radius:6px"></div>
<div class="r" style="left:254px;top:181px;width:201px;height:50px;box-sizing:border-box;border:4px solid #5f1f8a;border-radius:8px"></div>
<div class="r" style="left:437px;top:218px;width:215px;height:34px;box-sizing:border-box;border:4px solid #5f1f8a;border-radius:6px"></div>
<div class="r" style="left:639px;top:200px;width:206px;height:68px;box-sizing:border-box;border:4px solid #5f1f8a;border-radius:9px"></div>
</body></html>
